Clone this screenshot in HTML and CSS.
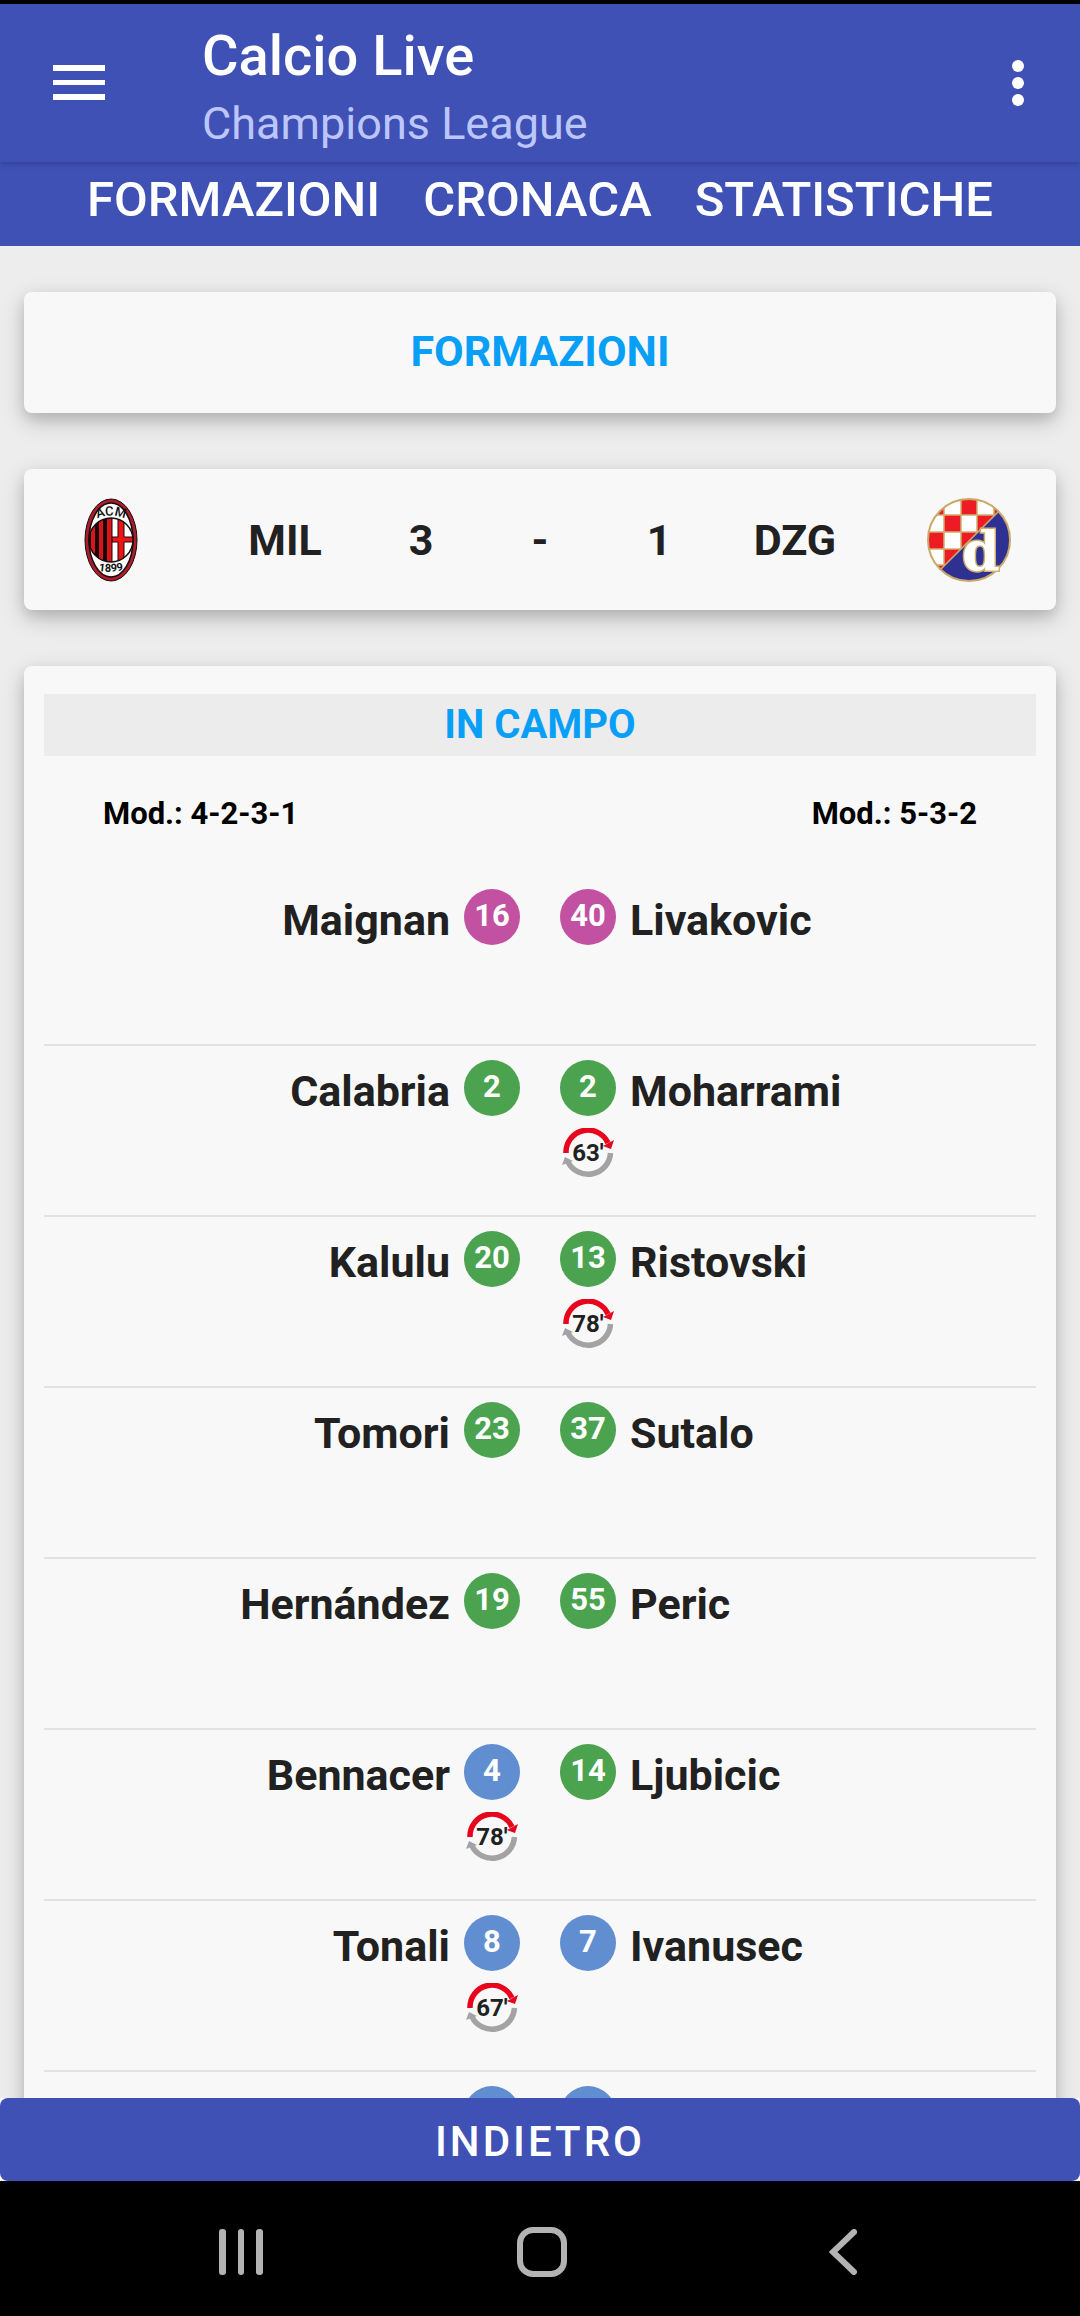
FILE: index.html
```html
<!DOCTYPE html>
<html lang="it">
<head>
    <meta charset="UTF-8">
    <meta name="viewport" content="width=device-width, initial-scale=1.0">
    <title>Calcio Live</title>
    <link rel="stylesheet" href="styles.css">
</head>
<body>
    <!-- shared icons -->
    <svg class="sprite" aria-hidden="true">
        <symbol id="sub" viewBox="0 0 52 50">
            <path d="M4 25A22 22 0 0 1 46 15" fill="none" stroke="#e8041c" stroke-width="5.500"/>
            <path d="M41 18L52 12L49 21Z" fill="#e8041c"/>
            <path d="M48.500 25A22.500 22.500 0 0 1 6 34" fill="none" stroke="#a3a3a3" stroke-width="5.500"/>
            <path d="M0 37L3 29L11 33Z" fill="#a3a3a3"/>
        </symbol>
    </svg>

    <header class="header">
        <button class="icon-button" aria-label="Menu">
            <svg width="52" height="36" viewBox="0 0 52 36" fill="#fff">
                <rect y="0" width="52" height="6"/>
                <rect y="15" width="52" height="5"/>
                <rect y="29" width="52" height="6"/>
            </svg>
        </button>
        <div class="heading">
            <h1>Calcio Live</h1>
            <p>Champions League</p>
        </div>
        <button class="icon-button" aria-label="Altro">
            <svg width="12" height="48" viewBox="0 0 12 48" fill="#fff">
                <circle cx="6" cy="7" r="6"/>
                <circle cx="6" cy="24" r="6"/>
                <circle cx="6" cy="41" r="6"/>
            </svg>
        </button>
    </header>

    <nav class="tabs">
        <a href="#formazioni">FORMAZIONI</a>
        <a href="#cronaca">CRONACA</a>
        <a href="#statistiche">STATISTICHE</a>
    </nav>

    <main class="content">
        <section class="card title-card">
            <h2>FORMAZIONI</h2>
        </section>

        <section class="card score">
            <svg width="54" height="84" viewBox="0 0 54 84" role="img" aria-label="Milan">
                <ellipse cx="27" cy="42" rx="26" ry="41" fill="#a91d2c" stroke="#1a0a0a" stroke-width="1"/>
                <ellipse cx="27" cy="42" rx="22" ry="37" fill="#fff" stroke="#1a0a0a" stroke-width="1.500"/>
                <clipPath id="ball"><circle cx="27" cy="42" r="22"/></clipPath>
                <g clip-path="url(#ball)">
                    <rect x="4" y="19" width="24" height="46" fill="#d6161b"/>
                    <path d="M3 19h4v46h-4zM11 19h4v46h-4zM19 19h4v46h-4z" fill="#1a0608"/>
                    <rect x="28" y="19" width="24" height="46" fill="#fff"/>
                    <path d="M34 19h6v46h-6zM28 39h24v5H28z" fill="#ee1414"/>
                    <path d="M28 19v46M34 19v20h-6M40 19v20h12M34 65v-21h-6M40 65v-21h12" fill="none" stroke="#1a0608"/>
                </g>
                <circle cx="27" cy="42" r="22" fill="none" stroke="#111" stroke-width="1.500"/>
                <path id="acm-arc" d="M10 22Q27 13 44 22" fill="none"/>
                <path id="year-arc" d="M10 72Q27 76 44 71" fill="none"/>
                <text class="crest-acm"><textPath href="#acm-arc" startOffset="50%">ACM</textPath></text>
                <text class="crest-year"><textPath href="#year-arc" startOffset="50%">1899</textPath></text>
            </svg>
            <span>MIL</span>
            <span>3</span>
            <span>-</span>
            <span>1</span>
            <span>DZG</span>
            <svg width="84" height="84" viewBox="0 0 84 84" role="img" aria-label="Dinamo Zagabria">
                <clipPath id="round"><circle cx="42" cy="42" r="41"/></clipPath>
                <g clip-path="url(#round)">
                    <rect width="84" height="84" fill="#fff"/>
                    <path d="M0 0h17v17H0zM34 0h16v17H34zM67 0h17v17H67zM17 17h17v17H17zM50 17h17v17H50zM0 34h17v17H0zM34 34h16v17H34zM17 51h17v17H17zM0 67h17v17H0z" fill="#ed1c24"/>
                    <path d="M17 0v84M34 0v84M50 0v84M67 0v84M0 17h84M0 34h84M0 51h84M0 67h84" stroke="#d2ae6d" stroke-width="1.500"/>
                    <path d="M72 13L12 73V84H84V13Z" fill="#2e3192" stroke="#d2ae6d" stroke-width="1.500"/>
                </g>
                <circle cx="42" cy="42" r="41" fill="none" stroke="#c9a868" stroke-width="2"/>
                <text class="crest-d" x="54" y="72">d</text>
            </svg>
        </section>

        <section class="card lineup">
            <h3>IN CAMPO</h3>
            <div class="modules">
                <span>Mod.: 4-2-3-1</span>
                <span>Mod.: 5-3-2</span>
            </div>
            <ul class="players">
                <li class="row">
                    <div class="player home"><span class="name">Maignan</span><span class="number goalkeeper">16</span></div>
                    <div class="player"><span class="number goalkeeper">40</span><span class="name">Livakovic</span></div>
                </li>
                <li class="row">
                    <div class="player home"><span class="name">Calabria</span><span class="number defender">2</span></div>
                    <div class="player">
                        <span class="number defender">2</span><span class="name">Moharrami</span>
                        <span class="sub"><svg width="52" height="50"><use href="#sub"/></svg><b>63'</b></span>
                    </div>
                </li>
                <li class="row">
                    <div class="player home"><span class="name">Kalulu</span><span class="number defender">20</span></div>
                    <div class="player">
                        <span class="number defender">13</span><span class="name">Ristovski</span>
                        <span class="sub"><svg width="52" height="50"><use href="#sub"/></svg><b>78'</b></span>
                    </div>
                </li>
                <li class="row">
                    <div class="player home"><span class="name">Tomori</span><span class="number defender">23</span></div>
                    <div class="player"><span class="number defender">37</span><span class="name">Sutalo</span></div>
                </li>
                <li class="row">
                    <div class="player home"><span class="name">Hernández</span><span class="number defender">19</span></div>
                    <div class="player"><span class="number defender">55</span><span class="name">Peric</span></div>
                </li>
                <li class="row">
                    <div class="player home">
                        <span class="name">Bennacer</span><span class="number midfielder">4</span>
                        <span class="sub"><svg width="52" height="50"><use href="#sub"/></svg><b>78'</b></span>
                    </div>
                    <div class="player"><span class="number defender">14</span><span class="name">Ljubicic</span></div>
                </li>
                <li class="row">
                    <div class="player home">
                        <span class="name">Tonali</span><span class="number midfielder">8</span>
                        <span class="sub"><svg width="52" height="50"><use href="#sub"/></svg><b>67'</b></span>
                    </div>
                    <div class="player"><span class="number midfielder">7</span><span class="name">Ivanusec</span></div>
                </li>
                <li class="row">
                    <div class="player home"><span class="name"></span><span class="number midfielder"></span></div>
                    <div class="player"><span class="number midfielder"></span><span class="name"></span></div>
                </li>
            </ul>
        </section>
    </main>

    <footer class="footer">
        <button class="back-button">INDIETRO</button>
    </footer>

    <nav class="system-bar">
        <button aria-label="Recenti">
            <svg width="46" height="46" viewBox="0 0 46 46" fill="#b3b3b3">
                <rect x="1" width="7" height="46" rx="3"/>
                <rect x="20" width="6" height="46" rx="3"/>
                <rect x="38" width="7" height="46" rx="3"/>
            </svg>
        </button>
        <button aria-label="Home">
            <svg width="50" height="50" viewBox="0 0 50 50">
                <rect x="3" y="3" width="44" height="44" rx="13" fill="none" stroke="#b3b3b3" stroke-width="6"/>
            </svg>
        </button>
        <button aria-label="Indietro">
            <svg width="28" height="46" viewBox="0 0 28 46">
                <path d="M25 3L4 23L25 43" fill="none" stroke="#b3b3b3" stroke-width="6" stroke-linecap="round"/>
            </svg>
        </button>
    </nav>
</body>
</html>
```
FILE: styles.css
```css
:root {
    --primary: #3f51b5;
    --accent: #099ff7;
    --text: #212121;
    --card: #f8f8f8;
}

* {
    box-sizing: border-box;
    margin: 0;
    padding: 0;
}

body {
    display: flex;
    flex-direction: column;
    height: 100vh;
    overflow: hidden;
    border-top: 4px solid #000;
    background: #ededed;
    color: var(--text);
    font-family: Roboto, "Liberation Sans", sans-serif;
}

button {
    border: none;
    background: none;
    font-family: inherit;
    cursor: pointer;
}

svg {
    display: block;
}

.sprite {
    position: absolute;
    width: 0;
    height: 0;
}

.header {
    position: relative;
    flex: none;
    display: flex;
    align-items: center;
    padding: 20px 56px 12px 53px;
    background: var(--primary);
    color: #fff;
    box-shadow: 0 2px 6px rgba(0, 0, 0, 0.2);
}

.icon-button {
    padding-bottom: 8px;
}

.heading {
    flex: 1;
    padding-left: 97px;
}

.heading h1 {
    font-size: 56px;
    font-weight: 500;
    line-height: 64px;
}

.heading p {
    padding-top: 10px;
    color: #bcc6fb;
    font-size: 45px;
    line-height: 52px;
}

.tabs {
    flex: none;
    display: flex;
    justify-content: center;
    gap: 43px;
    padding: 8px 0 16px;
    background: var(--primary);
}

.tabs a {
    color: #fff;
    font-size: 49px;
    font-weight: 500;
    line-height: 60px;
    text-decoration: none;
}

.content {
    flex: 1;
    min-height: 0;
    display: flex;
    flex-direction: column;
    gap: 56px;
    padding: 46px 24px 0;
    overflow: hidden;
}

.card {
    flex: none;
    border-radius: 8px;
    background: var(--card);
    box-shadow: 0 8px 24px rgba(0, 0, 0, 0.2), 0 6px 12px rgba(0, 0, 0, 0.1);
}

.title-card {
    padding: 35px 0 38px;
    color: var(--accent);
    text-align: center;
}

.title-card h2 {
    font-size: 43px;
    line-height: 48px;
}

.score {
    display: grid;
    grid-template-columns: 174fr 174fr 98fr 140fr 98fr 174fr 174fr;
    align-items: center;
    justify-items: center;
    padding: 29px 0 28px;
    font-size: 43px;
    font-weight: 700;
    line-height: 48px;
}

.crest-acm,
.crest-year {
    fill: #111;
    font-weight: 500;
    text-anchor: middle;
}

.crest-acm {
    font-size: 13px;
}

.crest-year {
    font-size: 11px;
    font-weight: 700;
}

.crest-d {
    fill: #fff;
    stroke: #d2ae6d;
    stroke-width: 3px;
    paint-order: stroke;
    font-family: "DejaVu Serif", serif;
    font-size: 54px;
    font-weight: 700;
    text-anchor: middle;
}

.lineup {
    padding: 28px 20px;
}

.lineup h3 {
    background: #ececec;
    color: var(--accent);
    font-size: 40px;
    line-height: 62px;
    text-align: center;
}

.modules {
    display: flex;
    justify-content: space-between;
    padding: 38px 59px 39px;
    color: #000;
    font-size: 31px;
    font-weight: 700;
    line-height: 40px;
}

.players {
    list-style: none;
}

.row {
    display: grid;
    grid-template-columns: 1fr 1fr;
    gap: 40px;
    height: 171px;
    padding-top: 14px;
    border-top: 2px solid #e2e2e2;
}

.row:first-child {
    border-top-color: transparent;
}

.player {
    display: grid;
    grid-template-columns: 56px 1fr;
    grid-template-rows: 56px 50px;
    gap: 12px 14px;
}

.home {
    grid-template-columns: 1fr 56px;
    text-align: right;
}

.name {
    padding-top: 6px;
    font-size: 43px;
    font-weight: 700;
    line-height: 50px;
}

.number {
    border-radius: 50%;
    color: #fff;
    font-size: 31px;
    font-weight: 700;
    line-height: 54px;
    text-align: center;
}

.goalkeeper {
    background: #c252a1;
}

.defender {
    background: #4ba350;
}

.midfielder {
    background: #618ed0;
}

.sub {
    display: grid;
    place-items: center;
}

.home .sub {
    grid-column: 2;
}

.sub svg,
.sub b {
    grid-area: 1 / 1;
}

.sub b {
    font-size: 24px;
    line-height: 28px;
}

.footer {
    flex: none;
    background: #fff;
}

.back-button {
    display: block;
    width: 100%;
    padding: 8px 0 3px;
    border-radius: 8px;
    background: var(--primary);
    color: #fff;
    font-size: 42px;
    font-weight: 500;
    letter-spacing: 3px;
    line-height: 72px;
}

.system-bar {
    flex: none;
    display: grid;
    grid-template-columns: repeat(3, 1fr);
    align-items: center;
    padding: 42px 87px 35px 91px;
    background: #000;
}

.system-bar button {
    display: flex;
    align-items: center;
    justify-content: center;
    height: 58px;
}
```
